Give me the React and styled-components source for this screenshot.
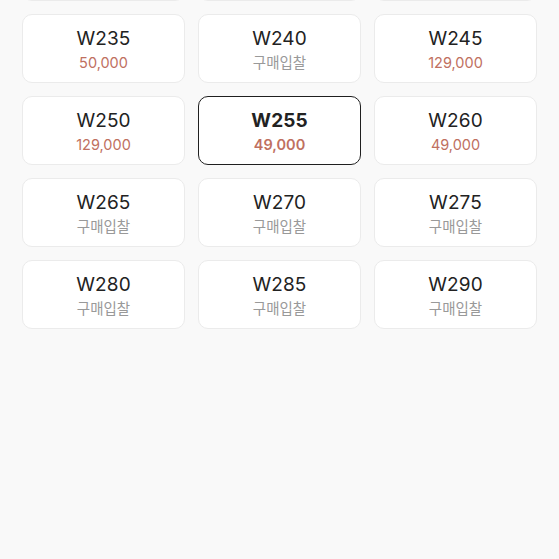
import React from "react";
import styled, { createGlobalStyle } from "styled-components";

const Global = createGlobalStyle`
  html, body { margin: 0; padding: 0; background: #f9f9f9; }
  body { font-family: Inter, "Noto Sans CJK KR", "Noto Sans", sans-serif; }
`;

const Page = styled.div`
  width: 559px;
  height: 559px;
  overflow: hidden;
  background: #f9f9f9;
`;

const Grid = styled.div`
  display: grid;
  grid-template-columns: repeat(3, 163px);
  grid-auto-rows: 69px;
  column-gap: 13px;
  row-gap: 13px;
  padding: 0 22px;
  margin-top: -68px;
`;

const Card = styled.div`
  box-sizing: border-box;
  background: #fff;
  border: ${(p) => (p.$selected ? "1.5px solid #1f1f1f" : "1px solid #ebebeb")};
  border-radius: 10px;
  display: flex;
  flex-direction: column;
  align-items: center;
  justify-content: center;
  gap: 4px;
  padding-top: 2px;
`;

const Size = styled.div`
  font-size: 19px;
  line-height: 23px;
  color: #222;
  font-weight: ${(p) => (p.$selected ? 700 : 400)};
  letter-spacing: 0.1px;
`;

const Price = styled.div`
  font-size: 14.5px;
  line-height: 18px;
  font-weight: ${(p) => (p.$selected ? 600 : 400)};
  color: ${(p) => (p.$bid ? "#999999" : "#c0705f")};
`;

const items = [
  ["W220", "구매입찰"],
  ["W225", "구매입찰"],
  ["W230", "구매입찰"],
  ["W235", "50,000"],
  ["W240", "구매입찰"],
  ["W245", "129,000"],
  ["W250", "129,000"],
  ["W255", "49,000", true],
  ["W260", "49,000"],
  ["W265", "구매입찰"],
  ["W270", "구매입찰"],
  ["W275", "구매입찰"],
  ["W280", "구매입찰"],
  ["W285", "구매입찰"],
  ["W290", "구매입찰"],
];

export default function App() {
  return (
    <Page>
      <Global />
      <Grid>
        {items.map(([size, price, sel]) => (
          <Card key={size} $selected={sel}>
            <Size $selected={sel}>{size}</Size>
            <Price $selected={sel} $bid={price === "구매입찰"}>{price}</Price>
          </Card>
        ))}
      </Grid>
    </Page>
  );
}
